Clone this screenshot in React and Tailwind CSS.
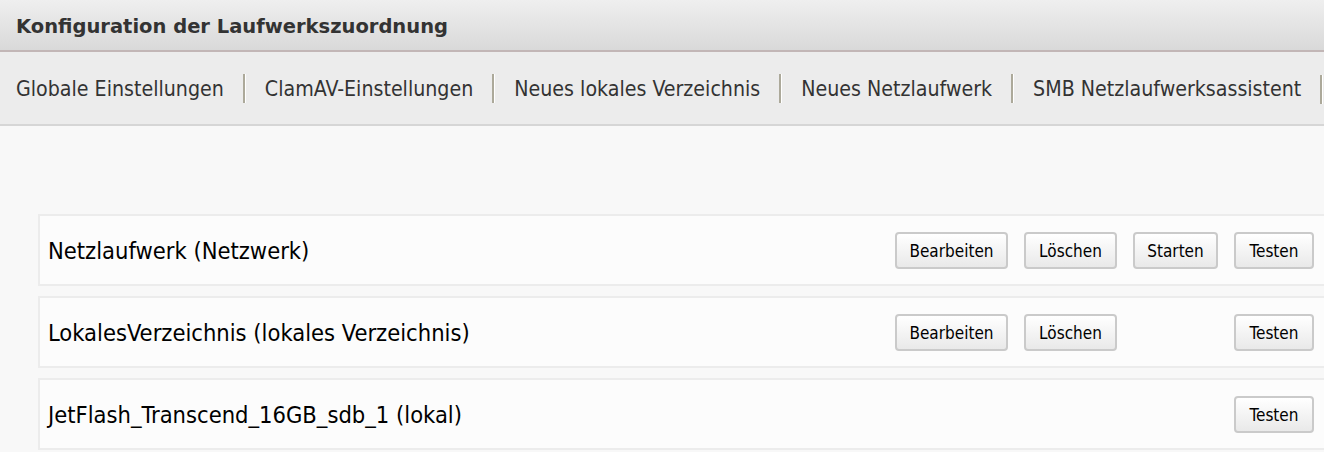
import React from 'react'

const tabs = [
  'Globale Einstellungen',
  'ClamAV-Einstellungen',
  'Neues lokales Verzeichnis',
  'Neues Netzlaufwerk',
  'SMB Netzlaufwerksassistent',
]

const drives = [
  { name: 'Netzlaufwerk (Netzwerk)', actions: ['Bearbeiten', 'Löschen', 'Starten', 'Testen'] },
  { name: 'LokalesVerzeichnis (lokales Verzeichnis)', actions: ['Bearbeiten', 'Löschen', null, 'Testen'] },
  { name: 'JetFlash_Transcend_16GB_sdb_1 (lokal)', actions: [null, null, null, 'Testen'] },
]

const slotWidths = ['w-[113px]', 'w-[93px]', 'w-[85px]', 'w-[80px]']

function ActionButton({ label, width }) {
  if (!label) return <div className={width} />
  return (
    <button
      className={`${width} h-[37px] pt-[2px] rounded-[4px] border-2 border-[#cacaca] bg-gradient-to-b from-[#ffffff] to-[#e9e9e9] text-[17px] text-black`}
    >
      {label}
    </button>
  )
}

export default function App() {
  return (
    <div
      className="w-[1324px] h-[452px] overflow-hidden bg-[#f8f8f8]"
      style={{ fontFamily: '"DejaVu Sans Condensed", "DejaVu Sans", sans-serif' }}
    >
      {/* Titelleiste */}
      <div className="h-[52px] bg-gradient-to-b from-[#efefef] to-[#d9d9d9] border-b-2 border-[#c2b6b6] flex items-center px-4 pt-[4px]">
        <h1
          className="text-[19.5px] font-bold text-[#333333]"
          style={{ fontFamily: '"DejaVu Sans", sans-serif' }}
        >
          Konfiguration der Laufwerkszuordnung
        </h1>
      </div>

      {/* Reiter */}
      <div className="h-[74px] bg-[#ececec] border-b-2 border-[#d6d6d6] flex items-center pl-4 pt-[2px]">
        {tabs.map((tab, i) => (
          <div key={tab} className="flex items-center">
            {i > 0 && (
              <span className="mx-[19px] h-[29px] w-[3px] border-l-2 border-[#aca99a] border-r border-r-white" />
            )}
            <span className="text-[21.2px] text-[#333333] whitespace-nowrap">{tab}</span>
          </div>
        ))}
        <span className="ml-[19px] h-[29px] w-[3px] border-l-2 border-[#aca99a] border-r border-r-white" />
      </div>

      {/* Laufwerke */}
      <div className="pt-[88px] pl-[38px] flex flex-col gap-[10px]">
        {drives.map((d) => (
          <div
            key={d.name}
            className="h-[72px] -mr-4 border-2 border-[#ececec] bg-[#fcfcfc] flex items-center pl-[8px] pr-[24px]"
          >
            <span className="flex-1 pt-[4px] text-[23.5px] text-black whitespace-nowrap">{d.name}</span>
            <div className="flex gap-[16px] pt-[1px]">
              {d.actions.map((a, i) => (
                <ActionButton key={i} label={a} width={slotWidths[i]} />
              ))}
            </div>
          </div>
        ))}
      </div>
    </div>
  )
}
